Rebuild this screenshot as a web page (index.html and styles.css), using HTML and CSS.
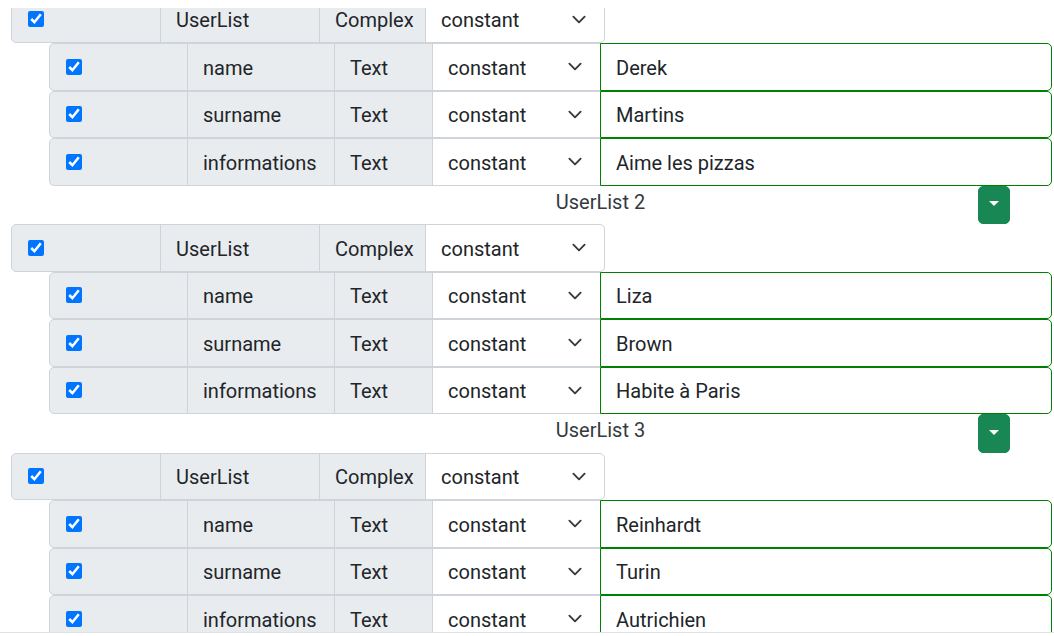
FILE: index.html
```html
<!DOCTYPE html>
<html lang="fr">
<head>
    <meta charset="UTF-8">
    <meta name="viewport" content="width=device-width, initial-scale=1.0">
    <title>UserList</title>
    <link rel="stylesheet" href="styles.css">
</head>
<body>
    <div class="viewport">
        <div class="list-view">

            <!-- Liste 1 (son entete est deja sorti de la vue) -->
            <div class="user-list">
                <div class="field-row parent-row">
                    <span class="cell check-cell"><input type="checkbox" checked></span>
                    <span class="cell name-cell">UserList</span>
                    <span class="cell type-cell">Complex</span>
                    <select class="cell mode-select"><option>constant</option></select>
                </div>
                <div class="children">
                    <div class="field-row child-row">
                        <span class="cell check-cell"><input type="checkbox" checked></span>
                        <span class="cell name-cell">name</span>
                        <span class="cell type-cell">Text</span>
                        <select class="cell mode-select"><option>constant</option></select>
                        <input type="text" class="cell value-input" value="Derek">
                    </div>
                    <div class="field-row child-row">
                        <span class="cell check-cell"><input type="checkbox" checked></span>
                        <span class="cell name-cell">surname</span>
                        <span class="cell type-cell">Text</span>
                        <select class="cell mode-select"><option>constant</option></select>
                        <input type="text" class="cell value-input" value="Martins">
                    </div>
                    <div class="field-row child-row">
                        <span class="cell check-cell"><input type="checkbox" checked></span>
                        <span class="cell name-cell">informations</span>
                        <span class="cell type-cell">Text</span>
                        <select class="cell mode-select"><option>constant</option></select>
                        <input type="text" class="cell value-input" value="Aime les pizzas">
                    </div>
                </div>
            </div>

            <!-- Liste 2 -->
            <div class="user-list">
                <div class="list-footer">
                    <span class="list-title">UserList 2</span>
                    <button type="button" class="toggle-btn"></button>
                </div>
                <div class="field-row parent-row">
                    <span class="cell check-cell"><input type="checkbox" checked></span>
                    <span class="cell name-cell">UserList</span>
                    <span class="cell type-cell">Complex</span>
                    <select class="cell mode-select"><option>constant</option></select>
                </div>
                <div class="children">
                    <div class="field-row child-row">
                        <span class="cell check-cell"><input type="checkbox" checked></span>
                        <span class="cell name-cell">name</span>
                        <span class="cell type-cell">Text</span>
                        <select class="cell mode-select"><option>constant</option></select>
                        <input type="text" class="cell value-input" value="Liza">
                    </div>
                    <div class="field-row child-row">
                        <span class="cell check-cell"><input type="checkbox" checked></span>
                        <span class="cell name-cell">surname</span>
                        <span class="cell type-cell">Text</span>
                        <select class="cell mode-select"><option>constant</option></select>
                        <input type="text" class="cell value-input" value="Brown">
                    </div>
                    <div class="field-row child-row">
                        <span class="cell check-cell"><input type="checkbox" checked></span>
                        <span class="cell name-cell">informations</span>
                        <span class="cell type-cell">Text</span>
                        <select class="cell mode-select"><option>constant</option></select>
                        <input type="text" class="cell value-input" value="Habite à Paris">
                    </div>
                </div>
            </div>

            <!-- Liste 3 -->
            <div class="user-list">
                <div class="list-footer">
                    <span class="list-title">UserList 3</span>
                    <button type="button" class="toggle-btn"></button>
                </div>
                <div class="field-row parent-row">
                    <span class="cell check-cell"><input type="checkbox" checked></span>
                    <span class="cell name-cell">UserList</span>
                    <span class="cell type-cell">Complex</span>
                    <select class="cell mode-select"><option>constant</option></select>
                </div>
                <div class="children">
                    <div class="field-row child-row">
                        <span class="cell check-cell"><input type="checkbox" checked></span>
                        <span class="cell name-cell">name</span>
                        <span class="cell type-cell">Text</span>
                        <select class="cell mode-select"><option>constant</option></select>
                        <input type="text" class="cell value-input" value="Reinhardt">
                    </div>
                    <div class="field-row child-row">
                        <span class="cell check-cell"><input type="checkbox" checked></span>
                        <span class="cell name-cell">surname</span>
                        <span class="cell type-cell">Text</span>
                        <select class="cell mode-select"><option>constant</option></select>
                        <input type="text" class="cell value-input" value="Turin">
                    </div>
                    <div class="field-row child-row">
                        <span class="cell check-cell"><input type="checkbox" checked></span>
                        <span class="cell name-cell">informations</span>
                        <span class="cell type-cell">Text</span>
                        <select class="cell mode-select"><option>constant</option></select>
                        <input type="text" class="cell value-input" value="Autrichien">
                    </div>
                </div>
            </div>

        </div>
    </div>
</body>
</html>
```

FILE: styles.css
```css
body {
    font-family: "Segoe UI", Roboto, "Noto Sans", "Liberation Sans", Arial, sans-serif;
    font-size: 20px;
    color: #212529;
    margin: 0;
    padding: 0;
    background: #fff;
}
.viewport {
    margin-top: 8px;
    height: 624px;
    overflow: hidden;
    border-bottom: 1px solid #dee2e6;
}
/* contenu defile de quelques pixels vers le haut */
.list-view {
    margin-top: -12.5px;
    padding: 0 2px 0 11px;
}
.list-footer {
    display: flex;
    align-items: flex-start;
    padding: 0 42px 0 212px;
}
.list-title {
    flex: 1;
    text-align: center;
    line-height: 30px;
    padding-top: 1px;
    color: #343a40;
}
.toggle-btn {
    font-family: inherit;
    font-size: 17.5px;
    line-height: 26.5px;
    padding: 5px 10px;
    border: 1px solid #198754;
    border-radius: 5px;
    background-color: #198754;
    color: #fff;
    cursor: pointer;
}
.toggle-btn::after {
    content: "";
    display: inline-block;
    vertical-align: 0.255em;
    border-top: 0.32em solid;
    border-right: 0.32em solid transparent;
    border-left: 0.32em solid transparent;
}
.field-row {
    display: flex;
    align-items: stretch;
}
.children {
    margin-left: 38px;
}
.cell {
    box-sizing: border-box;
    font-family: inherit;
    font-size: 20px;
    line-height: 30px;
    color: #212529;
    padding: 8.75px 15px 6.75px;
    margin: 0;
    border: 1px solid #ced4da;
    background-color: #e9ecef;
    white-space: nowrap;
}
.cell + .cell {
    margin-left: -1px;
}
.cell:first-child {
    border-radius: 5px 0 0 5px;
}
.cell:last-child {
    border-radius: 0 5px 5px 0;
}
.check-cell {
    display: flex;
    align-items: flex-start;
    padding-top: 14.5px;
}
.check-cell input {
    width: 16px;
    height: 16px;
    margin: 0 0 0 1px;
}
.mode-select {
    appearance: none;
    background-color: #fff;
    background-image: url("data:image/svg+xml,%3csvg xmlns='http://www.w3.org/2000/svg' viewBox='0 0 16 16'%3e%3cpath fill='none' stroke='%23343a40' stroke-linecap='round' stroke-linejoin='round' stroke-width='2' d='m2 5 6 6 6-6'/%3e%3c/svg%3e");
    background-repeat: no-repeat;
    background-position: right 15px center;
    background-size: 20px 15px;
    padding-right: 45px;
}
.value-input {
    flex: 1;
    min-width: 0;
    background-color: #fff;
    border-color: green;
    z-index: 2;
}

/* largeurs des colonnes */
.parent-row .check-cell { width: 150px; }
.parent-row .name-cell { width: 160px; }
.parent-row .type-cell { width: 107px; }
.parent-row .mode-select { width: 180px; }

.child-row .check-cell { width: 139px; }
.child-row .name-cell { width: 148px; }
.child-row .type-cell { width: 99px; }
.child-row .mode-select { width: 169px; }
```
